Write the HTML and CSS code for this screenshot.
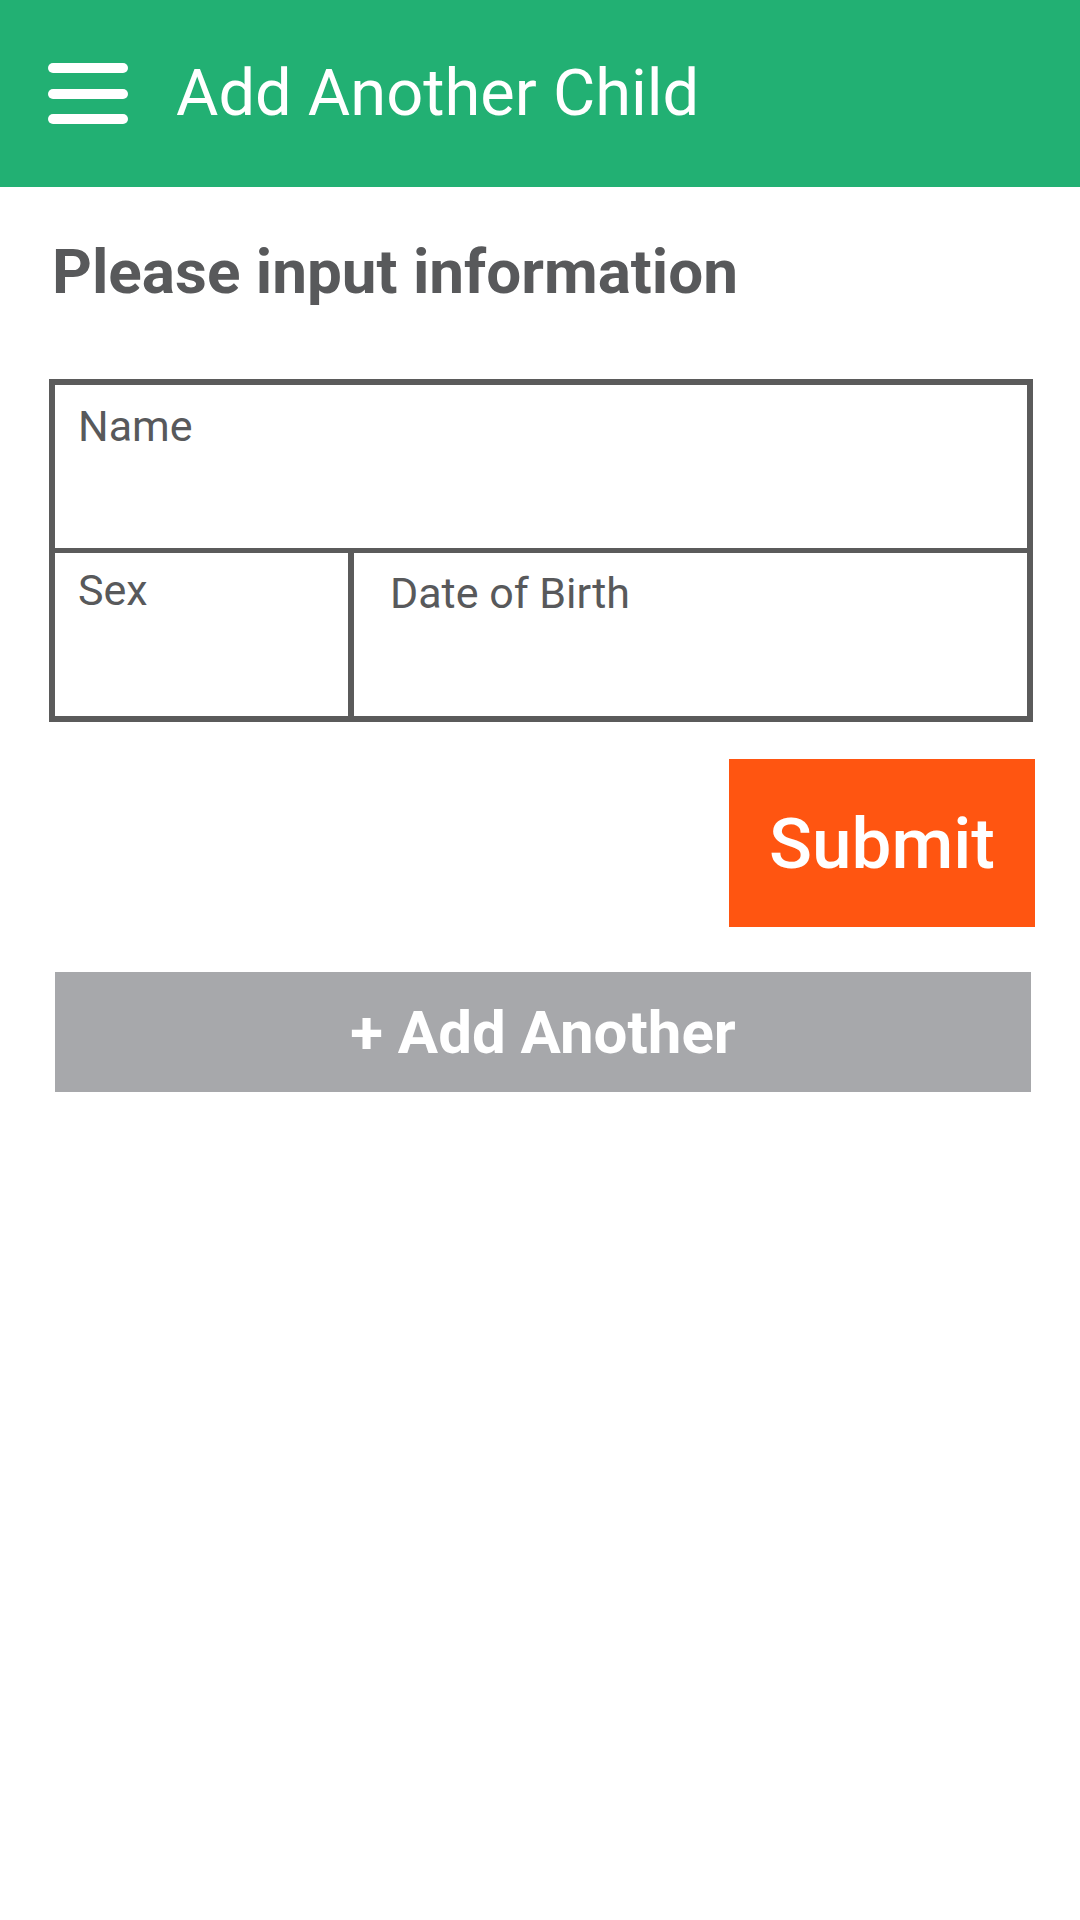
FILE: index.html
```html
<!DOCTYPE html>
<html lang="en">
<head>
<meta charset="utf-8">
<title>Add Another Child</title>
<link rel="stylesheet" href="styles.css">
</head>
<body>
<header class="appbar">
  <div class="menu" aria-label="Menu">
    <span class="bar"></span>
    <span class="bar"></span>
    <span class="bar"></span>
  </div>
  <h1 class="title">Add Another Child</h1>
</header>
<main class="content">
  <h2 class="heading">Please input information</h2>
  <div class="form-table">
    <div class="row-name">
      <div class="label label-name">Name</div>
    </div>
    <div class="row-split">
      <div class="cell-sex"><div class="label label-sex">Sex</div></div>
      <div class="cell-dob"><div class="label label-dob">Date of Birth</div></div>
    </div>
  </div>
  <div class="submit-row">
    <button class="btn-submit">Submit</button>
  </div>
  <button class="btn-add">+ Add Another</button>
</main>
</body>
</html>
```
FILE: styles.css
```css
html, body {
  margin: 0;
  padding: 0;
  background: #ffffff;
  font-family: Roboto, "Liberation Sans", Arial, sans-serif;
}
.appbar {
  height: 187px;
  background: #22b073;
  display: flex;
  align-items: center;
}
.menu {
  margin-left: 48px;
  width: 80px;
  display: flex;
  flex-direction: column;
  gap: 15.5px;
}
.bar {
  display: block;
  height: 10px;
  border-radius: 5px;
  background: #ffffff;
}
.title {
  margin: 0 0 0 48px;
  font-size: 65px;
  font-weight: 400;
  color: #ffffff;
  line-height: 1;
}
.content {
  display: flex;
  flex-direction: column;
}
.heading {
  margin: 50px 0 0 52px;
  font-size: 62px;
  line-height: 70px;
  font-weight: 700;
  color: #58595b;
}
.form-table {
  margin: 72px 0 0 49px;
  width: 984px;
  box-sizing: border-box;
  border: 6px solid #5b5b5b;
}
.row-name {
  height: 163px;
  border-bottom: 5px solid #5b5b5b;
}
.row-split {
  height: 163px;
  display: flex;
}
.cell-sex {
  width: 293px;
  border-right: 6px solid #5b5b5b;
}
.cell-dob {
  flex: 1;
}
.label {
  font-size: 43px;
  line-height: 48px;
  color: #58595b;
}
.label-name { padding: 17px 0 0 23px; }
.label-sex { padding: 13px 0 0 23px; }
.label-dob { padding: 16px 0 0 36px; }
.submit-row {
  display: flex;
  justify-content: flex-end;
  margin: 37px 45px 0 0;
}
.btn-submit {
  width: 306px;
  height: 168px;
  border: none;
  padding: 0;
  background: #ff5511;
  color: #ffffff;
  font-family: Roboto, "Liberation Sans", Arial, sans-serif;
  font-size: 71px;
  font-weight: 500;
}
.btn-add {
  margin: 45px 0 0 55px;
  width: 976px;
  height: 120px;
  border: none;
  padding: 0;
  background: #a7a8ab;
  color: #ffffff;
  font-family: Roboto, "Liberation Sans", Arial, sans-serif;
  font-size: 60px;
  font-weight: 700;
}
```
